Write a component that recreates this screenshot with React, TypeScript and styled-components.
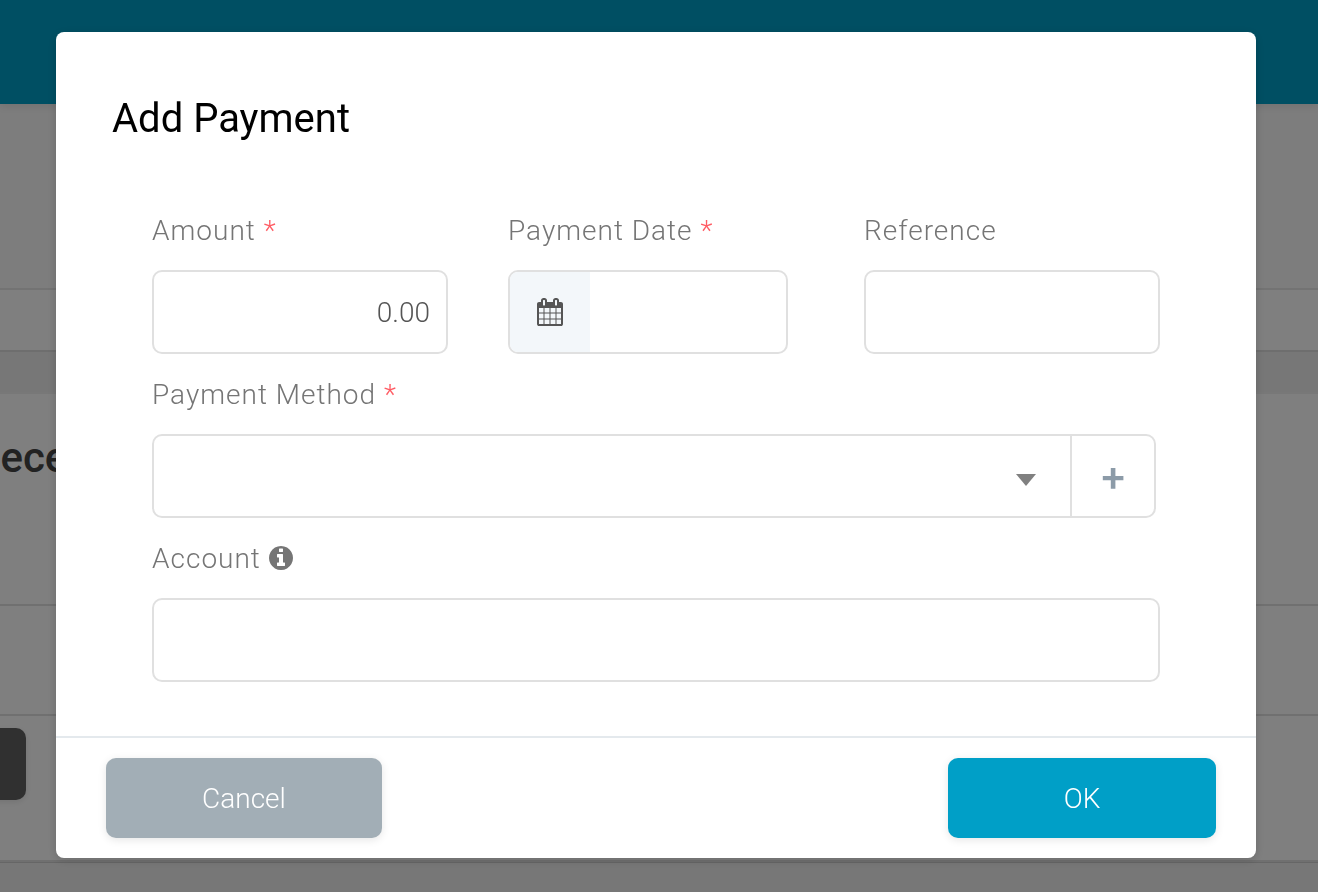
import React from "react";
import styled, { createGlobalStyle, css } from "styled-components";

const GlobalStyle = createGlobalStyle`
  *, *::before, *::after { box-sizing: border-box; }
  body {
    margin: 0;
    overflow: hidden;
    background: #ffffff;
    font-family: Roboto, "Liberation Sans", sans-serif;
    font-size: 28px;
    font-weight: 300;
  }
  button, input, select { font: inherit; }
`;

/* ---------- Page behind the dialog ---------- */

const Page = styled.div`
  display: flex;
  flex-direction: column;
  height: 100vh;
  overflow: hidden;
`;

const TopBar = styled.header`
  flex: none;
  height: 104px;
  background: #009fc7;
  box-shadow: 0 2px 8px rgba(0, 0, 0, 0.1);
  z-index: 1;
`;

const Band = styled.div<{ $height: number; $tone: string; $edge: string }>`
  flex: none;
  height: ${(p) => p.$height}px;
  background: ${(p) => p.$tone};
  border-bottom: 2px solid ${(p) => p.$edge};
`;

const Section = styled.section<{ $height: number }>`
  flex: none;
  height: ${(p) => p.$height}px;
  margin-left: -26px;
  border-bottom: 2px solid #e0e0e0;
`;

const SectionTitle = styled.h2`
  margin: 0;
  padding-top: 36px;
  font-size: 42px;
  line-height: 56px;
  font-weight: 500;
  color: #444444;
`;

const SectionFooter = styled(Section)`
  padding-top: 12px;
`;

const DarkButton = styled.button`
  display: block;
  width: 52px;
  height: 72px;
  border: 0;
  border-radius: 10px;
  background: #606060;
  box-shadow: 0 2px 6px rgba(0, 0, 0, 0.1);
`;

const PageEnd = styled.div`
  flex: 1;
  border-top: 1px solid #cccccc;
  background: #eeeeee;
`;

/* ---------- Dialog ---------- */

const Overlay = styled.div`
  position: fixed;
  inset: 0;
  z-index: 2;
  padding: 32px 62px 0 56px;
  background: rgba(0, 0, 0, 0.5);
  overflow: auto;
`;

const Dialog = styled.form`
  border-radius: 8px;
  background: #ffffff;
  box-shadow: 0 2px 10px rgba(0, 0, 0, 0.16);
`;

const DialogTitle = styled.h1`
  margin: 0;
  padding: 62px 56px 0;
  font-size: 40px;
  line-height: 50px;
  font-weight: 400;
  color: #000000;
`;

const DialogBody = styled.div`
  display: grid;
  grid-template-columns: repeat(3, minmax(0, 1fr));
  gap: 20px 60px;
  padding: 66px 96px 54px;
`;

const Field = styled.div<{ $wide?: boolean; $inset?: number }>`
  display: flex;
  flex-direction: column;
  gap: 18px;
  padding-right: ${(p) => p.$inset ?? 0}px;
  ${(p) => p.$wide && css`grid-column: 1 / -1;`}
`;

const Label = styled.label`
  display: flex;
  align-items: center;
  gap: 8px;
  line-height: 42px;
  letter-spacing: 1px;
  white-space: nowrap;
  color: #757575;
`;

const Required = styled.span`
  color: #ff5c64;
`;

const boxed = css`
  height: 84px;
  border: 2px solid #e0e0e0;
  border-radius: 10px;
  background: #ffffff;
`;

const TextInput = styled.input<{ $align?: "left" | "right" }>`
  ${boxed}
  width: 100%;
  padding: 0 16px;
  color: #555555;
  text-align: ${(p) => p.$align ?? "left"};
  outline: none;
`;

const Group = styled.div`
  ${boxed}
  display: flex;
  overflow: hidden;
`;

const IconButton = styled.button<{ $tinted?: boolean }>`
  flex: none;
  display: flex;
  align-items: center;
  justify-content: center;
  width: ${(p) => (p.$tinted ? 80 : 84)}px;
  padding: 0;
  border: 0;
  border-left: ${(p) => (p.$tinted ? "0" : "2px solid #e0e0e0")};
  background: ${(p) => (p.$tinted ? "#f3f7fa" : "transparent")};
`;

const GroupInput = styled.input`
  flex: 1;
  min-width: 0;
  padding: 0 16px;
  border: 0;
  background: transparent;
  color: #555555;
  outline: none;
`;

const SelectWrap = styled.div`
  position: relative;
  flex: 1;
  display: flex;
`;

const Select = styled.select`
  flex: 1;
  appearance: none;
  padding: 0 64px 0 16px;
  border: 0;
  background: transparent;
  color: #555555;
  outline: none;
`;

const Arrow = styled.svg`
  position: absolute;
  top: 38px;
  right: 34px;
  pointer-events: none;
`;

const DialogFooter = styled.footer`
  display: flex;
  justify-content: space-between;
  padding: 20px 40px 20px 50px;
  border-top: 2px solid #e4e9ed;
`;

const ActionButton = styled.button<{ $primary?: boolean }>`
  width: ${(p) => (p.$primary ? 268 : 276)}px;
  height: 80px;
  padding: 0;
  border: 0;
  border-radius: 10px;
  background: ${(p) => (p.$primary ? "#009fc7" : "#a2aeb6")};
  box-shadow: 0 2px 8px rgba(0, 0, 0, 0.1);
  color: #ffffff;
`;

const CalendarIcon = () => (
  <svg width="26" height="28" viewBox="0 0 1664 1792" fill="#555555" aria-hidden="true">
    <path d="M128 1664h288v-288h-288v288zM480 1664h320v-288h-320v288zM128 1312h288v-320h-288v320zM480 1312h320v-320h-320v320zM128 928h288v-288h-288v288zM864 1664h320v-288h-320v288zM480 928h320v-288h-320v288zM1248 1664h288v-288h-288v288zM864 1312h320v-320h-320v320zM512 448v-288q0-13-9.5-22.5t-22.5-9.5h-64q-13 0-22.5 9.5t-9.5 22.5v288q0 13 9.5 22.5t22.5 9.5h64q13 0 22.5-9.5t9.5-22.5zM1248 1312h288v-320h-288v320zM864 928h320v-288h-320v288zM1248 928h288v-288h-288v288zM1280 448v-288q0-13-9.5-22.5t-22.5-9.5h-64q-13 0-22.5 9.5t-9.5 22.5v288q0 13 9.5 22.5t22.5 9.5h64q13 0 22.5-9.5t9.5-22.5zM1664 384v1280q0 52-38 90t-90 38h-1408q-52 0-90-38t-38-90v-1280q0-52 38-90t90-38h128v-96q0-66 47-113t113-47h64q66 0 113 47t47 113v96h384v-96q0-66 47-113t113-47h64q66 0 113 47t47 113v96h128q52 0 90 38t38 90z" />
  </svg>
);

const InfoIcon = () => (
  <svg width="24" height="26" viewBox="128 128 1536 1664" fill="#757575" aria-hidden="true">
    <path d="M1152 1376v-160q0-14-9-23t-23-9h-96v-512q0-14-9-23t-23-9h-320q-14 0-23 9t-9 23v160q0 14 9 23t23 9h96v320h-96q-14 0-23 9t-9 23v160q0 14 9 23t23 9h448q14 0 23-9t9-23zM1024 480v-160q0-14-9-23t-23-9h-192q-14 0-23 9t-9 23v160q0 14 9 23t23 9h192q14 0 23-9t9-23zM1664 896q0 209-103 385.5t-279.5 279.5-385.5 103-385.5-103-279.5-279.5-103-385.5 103-385.5 279.5-279.5 385.5-103 385.5 103 279.5 279.5 103 385.5z" />
  </svg>
);

const PlusIcon = () => (
  <svg width="22" height="26" viewBox="0 0 22 26" fill="#8c9ba8" aria-hidden="true">
    <path d="M8.8 5h4.6v8h8v4.2h-8v8.5h-4.6v-8.5h-8v-4.2h8z" />
  </svg>
);

export default function App() {
  return (
    <>
      <GlobalStyle />
      <Page aria-hidden="true">
        <TopBar />
        <Band $height={186} $tone="#fafafa" $edge="#e6e6e6" />
        <Band $height={62} $tone="#ffffff" $edge="#dcdcdc" />
        <Band $height={42} $tone="#eeeeee" $edge="#f0f0f0" />
        <Section $height={212}>
          <SectionTitle>Received</SectionTitle>
        </Section>
        <Section $height={110} />
        <SectionFooter $height={146}>
          <DarkButton type="button" tabIndex={-1} />
        </SectionFooter>
        <PageEnd />
      </Page>

      <Overlay>
        <Dialog
          role="dialog"
          aria-labelledby="dialog-title"
          onSubmit={(e: React.FormEvent) => e.preventDefault()}
        >
          <DialogTitle id="dialog-title">Add Payment</DialogTitle>
          <DialogBody>
            <Field>
              <Label htmlFor="amount">
                Amount <Required>*</Required>
              </Label>
              <TextInput id="amount" $align="right" inputMode="decimal" defaultValue="0.00" />
            </Field>
            <Field $inset={16}>
              <Label htmlFor="date">
                Payment Date <Required>*</Required>
              </Label>
              <Group>
                <IconButton type="button" $tinted aria-label="Open calendar">
                  <CalendarIcon />
                </IconButton>
                <GroupInput id="date" type="text" />
              </Group>
            </Field>
            <Field>
              <Label htmlFor="reference">Reference</Label>
              <TextInput id="reference" type="text" />
            </Field>
            <Field $wide $inset={4}>
              <Label htmlFor="method">
                Payment Method <Required>*</Required>
              </Label>
              <Group>
                <SelectWrap>
                  <Select id="method" defaultValue="">
                    <option value="" />
                  </Select>
                  <Arrow width="20" height="12" viewBox="0 0 20 12" aria-hidden="true">
                    <path d="M0 0h20L10 12z" fill="#808080" />
                  </Arrow>
                </SelectWrap>
                <IconButton type="button" aria-label="Add payment method">
                  <PlusIcon />
                </IconButton>
              </Group>
            </Field>
            <Field $wide>
              <Label htmlFor="account">
                Account <InfoIcon />
              </Label>
              <TextInput id="account" type="text" />
            </Field>
          </DialogBody>
          <DialogFooter>
            <ActionButton type="button">Cancel</ActionButton>
            <ActionButton type="submit" $primary>
              OK
            </ActionButton>
          </DialogFooter>
        </Dialog>
      </Overlay>
    </>
  );
}
